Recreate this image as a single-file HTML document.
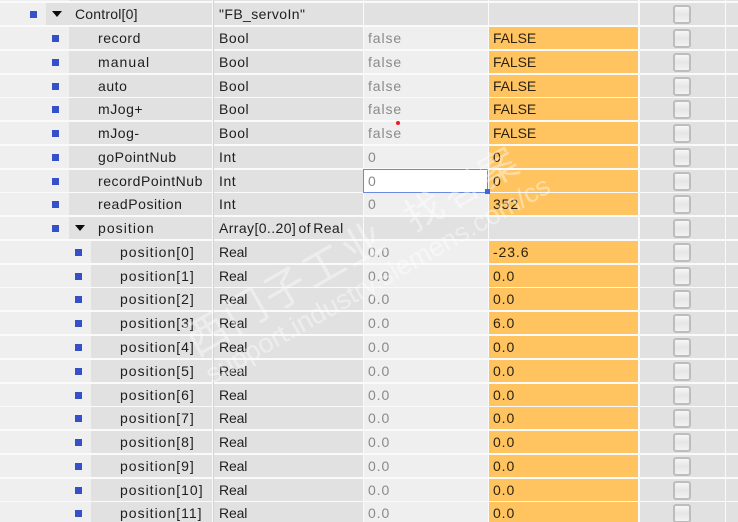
<!DOCTYPE html>
<html><head><meta charset="utf-8">
<style>
html,body{margin:0;padding:0;background:#f6f6f6}
#p{position:relative;width:738px;height:522px;overflow:hidden;background:#fafafa;font:14px/23px "Liberation Sans",sans-serif;color:#1e1e1e;letter-spacing:.4px;filter:blur(.35px)}
.r{position:absolute;left:0;width:738px;height:22px}
.r>*{position:absolute;top:0;height:22px;white-space:nowrap}
.l{left:0;width:212px;background:#efefef}
.d{width:auto;right:526px;background:#e1e1e1}
.l1 .d{left:69px}.l0 .d{left:46px}.l2 .d{left:91px}
.t{left:214px;width:149px;background:#e1e1e1;padding-left:5px;box-sizing:border-box}
.v{left:364px;width:124px;background:#efefef;color:#8a8a8a;padding-left:4px;box-sizing:border-box;letter-spacing:.9px}
.m{left:489px;width:149px;background:#ffc460;padding-left:4px;box-sizing:border-box;color:#2b2214;letter-spacing:.9px}
.f{letter-spacing:-.1px}
.q{letter-spacing:.55px}
.u{letter-spacing:-.15px}
.e{background:#e1e1e1}
.c{left:640px;width:85px;background:#e1e1e1}
.z{left:726px;width:12px;background:#e1e1e1}
.n{padding:0}
.l0 .n{left:75px;letter-spacing:.2px}.l1 .n{left:98px;letter-spacing:.55px}.l2 .n{left:120px;letter-spacing:1px}
.l1 .w{letter-spacing:1.05px}
.b{width:6.5px;height:6.5px!important;top:8px!important;background:#3550c8}
.l0 .b{left:30px}.l1 .b{left:52px}.l2 .b{left:75px}
.a{width:0;height:0!important;top:8px!important;border:5.5px solid transparent;border-top:6px solid #0c0c0c;border-bottom:0}
.k{left:673px;width:14px;height:15px!important;top:2px!important;border:2px solid #bdbdbd;border-radius:3px;background:linear-gradient(#f6f6f6,#e6e6e6 50%,#f2f2f2)}
#s{position:absolute;left:363px;top:169px;width:125px;height:24px;box-sizing:border-box;background:#fff;border:1.5px solid #6a8ae0;color:#8a8a8a;padding-left:4px;line-height:22px}
#h{position:absolute;left:485px;top:189px;width:5px;height:5px;background:#3a66d8}
#dot{position:absolute;left:396px;top:121px;width:4px;height:4px;border-radius:50%;background:#ee1c25}
svg{position:absolute;left:0;top:0}
</style></head><body><div id="p">
<div class="r l1" style="top:-21px"><div class="l"></div><div class="d"></div><div class="t"></div><div class="v e"></div><div class="m e"></div><div class="c"></div><div class="z"></div></div>

<div class="r l0" style="top:3px"><div class="l"></div><div class="d"></div><div class="b"></div><div class="a" style="left:52px"></div><div class="n">Control[0]</div><div class="t">"FB_servoIn"</div><div class="v e"></div><div class="m e"></div><div class="c"></div><div class="k"></div><div class="z"></div></div>
<div class="r l1" style="top:27px"><div class="l"></div><div class="d"></div><div class="b"></div><div class="n">record</div><div class="t q">Bool</div><div class="v">false</div><div class="m f">FALSE</div><div class="c"></div><div class="k"></div><div class="z"></div></div>
<div class="r l1" style="top:51px"><div class="l"></div><div class="d"></div><div class="b"></div><div class="n w">manual</div><div class="t q">Bool</div><div class="v">false</div><div class="m f">FALSE</div><div class="c"></div><div class="k"></div><div class="z"></div></div>
<div class="r l1" style="top:75px"><div class="l"></div><div class="d"></div><div class="b"></div><div class="n">auto</div><div class="t q">Bool</div><div class="v">false</div><div class="m f">FALSE</div><div class="c"></div><div class="k"></div><div class="z"></div></div>
<div class="r l1" style="top:98px"><div class="l"></div><div class="d"></div><div class="b"></div><div class="n">mJog+</div><div class="t q">Bool</div><div class="v">false</div><div class="m f">FALSE</div><div class="c"></div><div class="k"></div><div class="z"></div></div>
<div class="r l1" style="top:122px"><div class="l"></div><div class="d"></div><div class="b"></div><div class="n">mJog-</div><div class="t q">Bool</div><div class="v">false</div><div class="m f">FALSE</div><div class="c"></div><div class="k"></div><div class="z"></div></div>
<div class="r l1" style="top:146px"><div class="l"></div><div class="d"></div><div class="b"></div><div class="n">goPointNub</div><div class="t q">Int</div><div class="v">0</div><div class="m">0</div><div class="c"></div><div class="k"></div><div class="z"></div></div>
<div class="r l1" style="top:170px"><div class="l"></div><div class="d"></div><div class="b"></div><div class="n">recordPointNub</div><div class="t q">Int</div><div class="v"></div><div class="m">0</div><div class="c"></div><div class="k"></div><div class="z"></div></div>
<div class="r l1" style="top:193px"><div class="l"></div><div class="d"></div><div class="b"></div><div class="n">readPosition</div><div class="t q">Int</div><div class="v">0</div><div class="m">352</div><div class="c"></div><div class="k"></div><div class="z"></div></div>
<div class="r l1" style="top:217px"><div class="l"></div><div class="d"></div><div class="b"></div><div class="a" style="left:75px"></div><div class="n w">position</div><div class="t" style="word-spacing:-2px">Array[0..20] of Real</div><div class="v e"></div><div class="m e"></div><div class="c"></div><div class="k"></div><div class="z"></div></div>
<div class="r l2" style="top:241px"><div class="l"></div><div class="d"></div><div class="b"></div><div class="n">position[0]</div><div class="t u">Real</div><div class="v">0.0</div><div class="m">-23.6</div><div class="c"></div><div class="k"></div><div class="z"></div></div>
<div class="r l2" style="top:265px"><div class="l"></div><div class="d"></div><div class="b"></div><div class="n">position[1]</div><div class="t u">Real</div><div class="v">0.0</div><div class="m">0.0</div><div class="c"></div><div class="k"></div><div class="z"></div></div>
<div class="r l2" style="top:288px"><div class="l"></div><div class="d"></div><div class="b"></div><div class="n">position[2]</div><div class="t u">Real</div><div class="v">0.0</div><div class="m">0.0</div><div class="c"></div><div class="k"></div><div class="z"></div></div>
<div class="r l2" style="top:312px"><div class="l"></div><div class="d"></div><div class="b"></div><div class="n">position[3]</div><div class="t u">Real</div><div class="v">0.0</div><div class="m">6.0</div><div class="c"></div><div class="k"></div><div class="z"></div></div>
<div class="r l2" style="top:336px"><div class="l"></div><div class="d"></div><div class="b"></div><div class="n">position[4]</div><div class="t u">Real</div><div class="v">0.0</div><div class="m">0.0</div><div class="c"></div><div class="k"></div><div class="z"></div></div>
<div class="r l2" style="top:360px"><div class="l"></div><div class="d"></div><div class="b"></div><div class="n">position[5]</div><div class="t u">Real</div><div class="v">0.0</div><div class="m">0.0</div><div class="c"></div><div class="k"></div><div class="z"></div></div>
<div class="r l2" style="top:384px"><div class="l"></div><div class="d"></div><div class="b"></div><div class="n">position[6]</div><div class="t u">Real</div><div class="v">0.0</div><div class="m">0.0</div><div class="c"></div><div class="k"></div><div class="z"></div></div>
<div class="r l2" style="top:407px"><div class="l"></div><div class="d"></div><div class="b"></div><div class="n">position[7]</div><div class="t u">Real</div><div class="v">0.0</div><div class="m">0.0</div><div class="c"></div><div class="k"></div><div class="z"></div></div>
<div class="r l2" style="top:431px"><div class="l"></div><div class="d"></div><div class="b"></div><div class="n">position[8]</div><div class="t u">Real</div><div class="v">0.0</div><div class="m">0.0</div><div class="c"></div><div class="k"></div><div class="z"></div></div>
<div class="r l2" style="top:455px"><div class="l"></div><div class="d"></div><div class="b"></div><div class="n">position[9]</div><div class="t u">Real</div><div class="v">0.0</div><div class="m">0.0</div><div class="c"></div><div class="k"></div><div class="z"></div></div>
<div class="r l2" style="top:479px"><div class="l"></div><div class="d"></div><div class="b"></div><div class="n">position[10]</div><div class="t u">Real</div><div class="v">0.0</div><div class="m">0.0</div><div class="c"></div><div class="k"></div><div class="z"></div></div>
<div class="r l2" style="top:502px"><div class="l"></div><div class="d"></div><div class="b"></div><div class="n">position[11]</div><div class="t u">Real</div><div class="v">0.0</div><div class="m">0.0</div><div class="c"></div><div class="k"></div><div class="z"></div></div>

<div style="position:absolute;left:213px;top:0;width:1px;height:522px;background:#d2d2d2"></div>
<div id="s">0</div><div id="h"></div><div id="dot"></div>

<svg width="738" height="522" viewBox="0 0 738 522">
<g fill="#fff" fill-opacity=".42">
<text transform="translate(196,357) rotate(-30)" font-family="'Noto Sans CJK SC',sans-serif" font-size="42" letter-spacing="3">西门子工业</text>
<text transform="translate(414,232) rotate(-30)" font-family="'Noto Sans CJK SC',sans-serif" font-size="38" letter-spacing="5">找答案</text>
<text transform="translate(212,384) rotate(-29.5)" font-family="'Liberation Sans',sans-serif" font-size="27" letter-spacing="0">support.industry.siemens.com/cs</text>
</g></svg>
</div></body></html>
